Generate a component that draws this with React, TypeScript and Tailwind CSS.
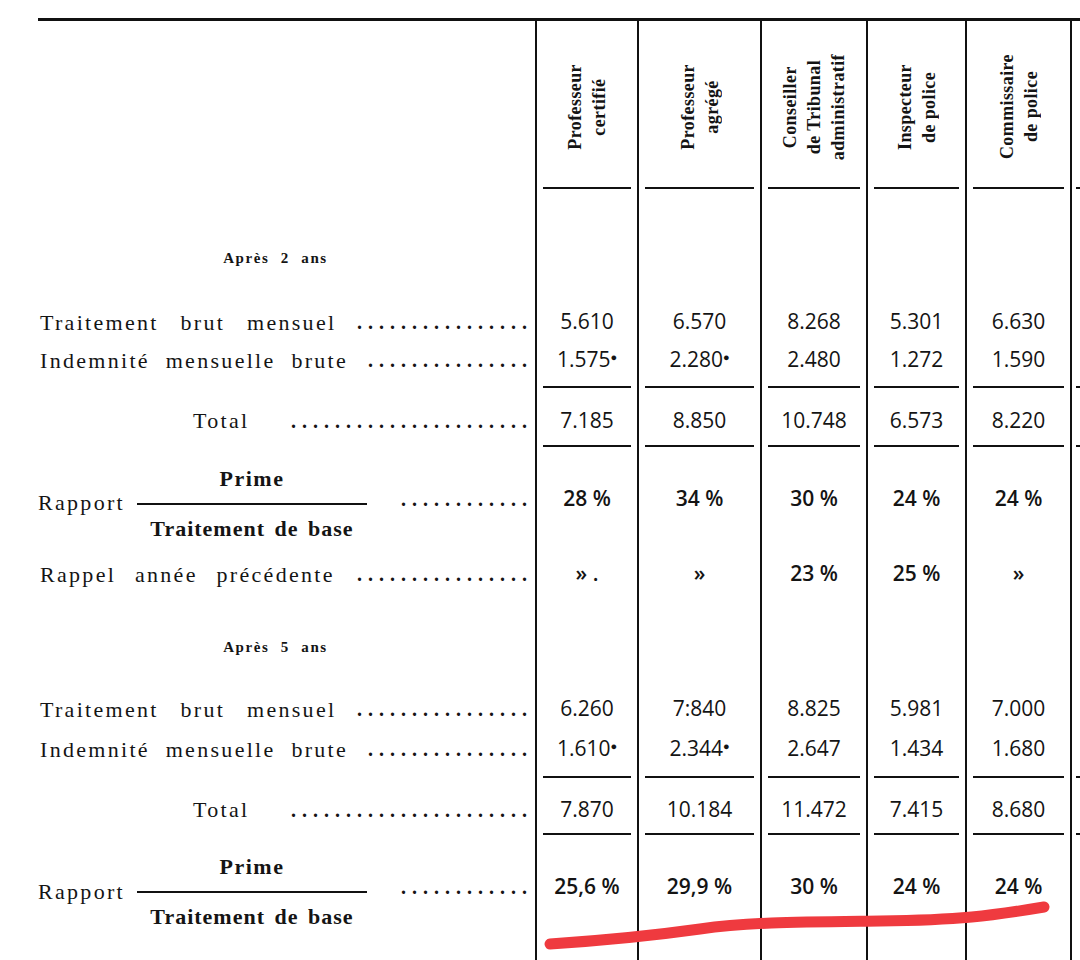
import React from "react";

const colW = ["w-[102px]", "w-[123px]", "w-[106px]", "w-[99px]", "w-[105px]"];

const serif = "font-['Liberation_Serif',serif]";
const labelText = `${serif} text-[22px] tracking-[2.3px] [word-spacing:8px] text-[#141414]`;
const numText = "font-['Open_Sans',sans-serif] text-[21px] font-medium text-[#141414]";

function Dots({ n }: { n: number }) {
  return (
    <span
      className={`${serif} ml-auto whitespace-nowrap text-[20px] font-bold tracking-[6px] [word-spacing:0px]`}
    >
      {".".repeat(n)}
    </span>
  );
}

function Cells({
  values = [],
  className = "",
  render,
}: {
  values?: React.ReactNode[];
  className?: string;
  render?: (i: number) => React.ReactNode;
}) {
  return (
    <>
      {colW.map((w, i) => (
        <div
          key={i}
          className={`${w} flex shrink-0 items-center justify-center border-l-2 border-[#111] ${className}`}
        >
          {render ? render(i) : values[i]}
        </div>
      ))}
      <div className={`flex flex-1 items-center border-l-2 border-[#111] ${className}`}>
        {render ? render(5) : null}
      </div>
    </>
  );
}

function Row({
  h,
  label,
  values,
  labelClass = "",
  cellClass = "",
}: {
  h: string;
  label?: React.ReactNode;
  values?: React.ReactNode[];
  labelClass?: string;
  cellClass?: string;
}) {
  return (
    <div className={`flex ${h}`}>
      <div className={`flex w-[535px] shrink-0 items-center pr-[2px] ${labelClass}`}>{label}</div>
      <Cells values={values} className={`${numText} ${cellClass}`} />
    </div>
  );
}

function Separator() {
  return (
    <div className="flex h-[2px]">
      <div className="w-[535px] shrink-0" />
      <Cells
        render={(i) => (
          <div className={`h-full w-full bg-[#111] ${i === 5 ? "ml-[4px]" : "mx-[6px]"}`} />
        )}
      />
    </div>
  );
}

function Star({ v }: { v: string }) {
  return (
    <span>
      {v}
      <span className="relative -top-[6px] text-[11px]">●</span>
    </span>
  );
}

function Fraction() {
  return (
    <div
      className={`ml-[12px] mt-[10px] flex w-[230px] flex-col items-center ${serif} [word-spacing:3px]`}
    >
      <div className="h-[48px] text-[22px] font-semibold leading-[48px] tracking-[1.5px]">Prime</div>
      <div className="h-[2px] w-full bg-[#111]" />
      <div className="h-[48px] text-[22px] font-semibold leading-[48px] tracking-[1px]">
        Traitement de base
      </div>
    </div>
  );
}

function Header() {
  const heads: string[][] = [
    ["Professeur", "certifié"],
    ["Professeur", "agrégé"],
    ["Conseiller", "de Tribunal", "administratif"],
    ["Inspecteur", "de police"],
    ["Commissaire", "de police"],
  ];
  return (
    <div className="flex h-[166px]">
      <div className="w-[535px] shrink-0" />
      <Cells
        className="pt-[6px]"
        render={(i) =>
          i < 5 ? (
            <div
              className={`${serif} rotate-180 text-center text-[18px] font-bold leading-[24px] tracking-[0.4px] text-[#141414] [writing-mode:vertical-rl]`}
            >
              {heads[i].map((l, k) => (
                <React.Fragment key={k}>
                  {k > 0 && <br />}
                  {l}
                </React.Fragment>
              ))}
            </div>
          ) : null
        }
      />
    </div>
  );
}

function Section({ title }: { title: string }) {
  return (
    <Row
      h="h-[38px]"
      labelClass="justify-center pl-[18px]"
      label={
        <span className={`${serif} text-[15px] font-bold tracking-[1.6px] [word-spacing:6px]`}>
          {title}
        </span>
      }
    />
  );
}

export default function App() {
  return (
    <div className="relative h-[960px] w-[1080px] overflow-hidden bg-white text-[#141414]">
      <div className="pt-[18px]">
        <div className="ml-[38px] h-[3px] bg-[#111]" />
      </div>

      <Header />
      <Separator />

      {/* Après 2 ans */}
      <Row h="h-[50px]" />
      <Section title="Après 2 ans" />
      <Row h="h-[26px]" />
      <Row
        h="h-[38px]"
        labelClass={`pl-[40px] ${labelText}`}
        label={
          <>
            <span className="[word-spacing:14px]">Traitement brut mensuel</span>
            <Dots n={16} />
          </>
        }
        values={["5.610", "6.570", "8.268", "5.301", "6.630"]}
      />
      <Row
        h="h-[38px]"
        labelClass={`pl-[40px] ${labelText}`}
        label={
          <>
            <span>Indemnité mensuelle brute</span>
            <Dots n={15} />
          </>
        }
        values={[<Star v="1.575" />, <Star v="2.280" />, "2.480", "1.272", "1.590"]}
      />
      <Row h="h-[7px]" />
      <Separator />
      <Row
        h="h-[57px]"
        labelClass={`pl-[193px] pt-[8px] ${labelText}`}
        cellClass="pt-[8px]"
        label={
          <>
            <span>Total</span>
            <Dots n={22} />
          </>
        }
        values={["7.185", "8.850", "10.748", "6.573", "8.220"]}
      />
      <Separator />
      <Row
        h="h-[103px]"
        labelClass={`pl-[38px] ${labelText}`}
        cellClass="font-semibold"
        label={
          <>
            <span className="mt-[8px]">Rapport</span>
            <Fraction />
            <Dots n={12} />
          </>
        }
        values={["28 %", "34 %", "30 %", "24 %", "24 %"]}
      />
      <Row
        h="h-[48px]"
        labelClass={`pl-[40px] ${labelText}`}
        cellClass="font-semibold"
        label={
          <>
            <span className="[word-spacing:11px]">Rappel année précédente</span>
            <Dots n={16} />
          </>
        }
        values={["» .", "»", "23 %", "25 %", "»"]}
      />

      {/* Après 5 ans */}
      <Row h="h-[30px]" />
      <Section title="Après 5 ans" />
      <Row h="h-[24px]" />
      <Row
        h="h-[38px]"
        labelClass={`pl-[40px] ${labelText}`}
        label={
          <>
            <span className="[word-spacing:14px]">Traitement brut mensuel</span>
            <Dots n={16} />
          </>
        }
        values={["6.260", "7:840", "8.825", "5.981", "7.000"]}
      />
      <Row
        h="h-[42px]"
        labelClass={`pl-[40px] ${labelText}`}
        label={
          <>
            <span>Indemnité mensuelle brute</span>
            <Dots n={15} />
          </>
        }
        values={[<Star v="1.610" />, <Star v="2.344" />, "2.647", "1.434", "1.680"]}
      />
      <Row h="h-[6px]" />
      <Separator />
      <Row
        h="h-[55px]"
        labelClass={`pl-[193px] pt-[8px] ${labelText}`}
        cellClass="pt-[8px]"
        label={
          <>
            <span>Total</span>
            <Dots n={22} />
          </>
        }
        values={["7.870", "10.184", "11.472", "7.415", "8.680"]}
      />
      <Separator />
      <Row
        h="h-[104px]"
        labelClass={`pl-[38px] ${labelText}`}
        cellClass="font-semibold"
        label={
          <>
            <span className="mt-[8px]">Rapport</span>
            <Fraction />
            <Dots n={12} />
          </>
        }
        values={["25,6 %", "29,9 %", "30 %", "24 %", "24 %"]}
      />
      <Row h="h-[40px]" />

      {/* red pen mark */}
      <svg
        className="pointer-events-none absolute left-0 top-0"
        width="1080"
        height="960"
        viewBox="0 0 1080 960"
      >
        <path
          d="M550 944 C 610 940, 650 936, 700 929 S 800 922, 880 921 S 990 916, 1044 907"
          fill="none"
          stroke="#ef3a3f"
          strokeWidth="11"
          strokeLinecap="round"
        />
      </svg>
    </div>
  );
}
